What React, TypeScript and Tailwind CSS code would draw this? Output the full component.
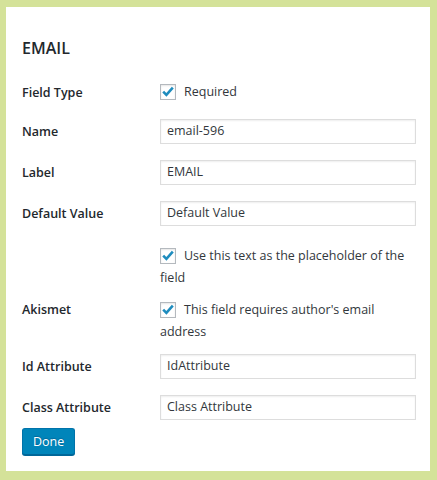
import type { ReactNode } from "react";

const font = { fontFamily: '"Open Sans", "Noto Sans", Arial, sans-serif' };

function Check() {
  return (
    <span className="relative mr-[8px] inline-block h-4 w-4 shrink-0 border border-[#b4b9be] bg-white align-[-4px] shadow-[inset_0_1px_2px_rgba(0,0,0,0.1)]">
      <svg viewBox="0 0 16 16" className="absolute left-[-1px] top-[-1px] h-4 w-4">
        <path d="M3.2 7.6 L6.4 10.8 L12.8 3.6" fill="none" stroke="#1e8cbe" strokeWidth="2.6" strokeLinejoin="miter" strokeLinecap="butt" />
      </svg>
    </span>
  );
}

function Row({ label, children, className = "" }: { label?: string; children: ReactNode; className?: string }) {
  return (
    <div className={`flex ${className}`}>
      <div className="w-[138px] shrink-0 text-[12.5px] font-semibold leading-[21px] text-[#23282d]">{label}</div>
      <div className="min-w-0 flex-1">{children}</div>
    </div>
  );
}

function TextInput({ value }: { value: string }) {
  return (
    <div className="flex h-[25px] items-center border border-[#ddd] bg-white px-[6px] text-[12.5px] text-[#32373c] shadow-[inset_0_1px_2px_rgba(0,0,0,0.07)]">
      {value}
    </div>
  );
}

export default function App() {
  return (
    <div className="h-[480px] w-[437px] bg-[#d4e299] pb-[9px] pl-[6px] pr-[7px] pt-[7px]" style={font}>
      <div className="h-full bg-white pl-4 pr-[14px] pt-[29px]">
        <h3 className="text-[16px] font-semibold leading-[24px] text-[#23282d]">EMAIL</h3>

        <Row label="Field Type" className="mt-[20px] items-center">
          <div className="text-[12.5px] leading-[24px] text-[#32373c]">
            <Check />
            Required
          </div>
        </Row>

        <Row label="Name" className="mt-[15px] items-center">
          <TextInput value="email-596" />
        </Row>
        <Row label="Label" className="mt-4 items-center">
          <TextInput value="EMAIL" />
        </Row>
        <Row label="Default Value" className="mt-4 items-center">
          <TextInput value="Default Value" />
        </Row>

        <Row className="mt-[19px]">
          <div className="text-[12.5px] leading-[21.5px] text-[#32373c]">
            <Check />
            Use this text as the placeholder of the field
          </div>
        </Row>

        <Row label="Akismet" className="mt-[11px]">
          <div className="text-[12.5px] leading-[21.5px] text-[#32373c]">
            <Check />
            This field requires author's email address
          </div>
        </Row>

        <Row label="Id Attribute" className="mt-3 items-center">
          <TextInput value="IdAttribute" />
        </Row>
        <Row label="Class Attribute" className="mt-4 items-center">
          <TextInput value="Class Attribute" />
        </Row>

        <button
          type="button"
          className="mt-2 h-[27px] rounded-[3px] border border-[#0073aa] border-b-[#006799] bg-[#0085ba] px-[10px] text-[12.5px] leading-[25px] text-white shadow-[0_1px_0_#006799] [text-shadow:0_-1px_1px_#006799]"
        >
          Done
        </button>
      </div>
    </div>
  );
}
